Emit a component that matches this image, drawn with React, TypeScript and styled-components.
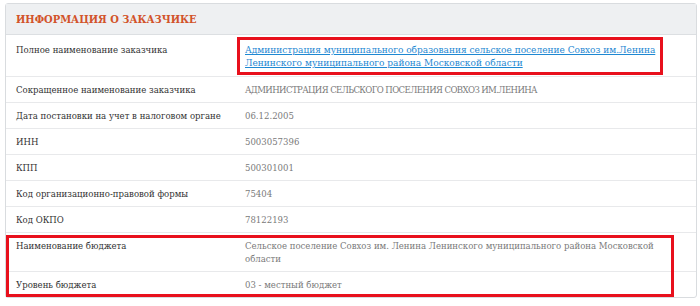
import React from "react";
import styled, { createGlobalStyle, css } from "styled-components";

const Global = createGlobalStyle`
  html, body { margin: 0; padding: 0; background: #ffffff; }
  body { font-family: "DejaVu Serif Condensed", "DejaVu Serif", serif; }
`;

const Page = styled.div`
  padding: 3px 3px 5px 5px;
`;

const Panel = styled.section`
  border: 1px solid #d9dcdf;
  border-radius: 3px;
  background: #fff;
`;

const Header = styled.header`
  background: #eef0f2;
  border-bottom: 1px solid #dcdfe2;
  height: 30px;
  display: flex;
  align-items: center;
  padding: 0 10px;
`;

const Title = styled.h2`
  margin: 0;
  font-size: 11px;
  font-weight: bold;
  color: #d2532a;
`;

const Row = styled.div<{ $last?: boolean }>`
  display: grid;
  grid-template-columns: 231px 1fr;
  border-bottom: ${(p) => (p.$last ? "none" : "1px solid #e8e9eb")};
  font-size: 9.5px;
  line-height: 13px;
`;

const Label = styled.div<{ $tall?: boolean }>`
  padding: ${(p) => (p.$tall ? "8px 0 7px 10px" : "6px 0 6px 10px")};
  color: #333;
`;

const redFrame = css`
  content: "";
  position: absolute;
  border: 3px solid #e8101c;
  pointer-events: none;
`;

const Value = styled.div<{ $tall?: boolean; $caps?: boolean; $boxed?: boolean }>`
  position: relative;
  padding: ${(p) => (p.$tall ? "8px 38px 7px 8px" : "6px 40px 6px 8px")};
  color: #7a7a7a;
  letter-spacing: ${(p) => (p.$caps ? "-0.6px" : "normal")};
  ${(p) =>
    p.$boxed &&
    css`
      &::after {
        ${redFrame};
        top: 2px;
        bottom: 1px;
        left: 0;
        right: 33px;
      }
    `}
`;

const Link = styled.a`
  color: #1e88d2;
  font-size: 10px;
  text-decoration: underline;
`;

const BudgetGroup = styled.div`
  position: relative;
  &::after {
    ${redFrame};
    top: 2px;
    bottom: 0;
    left: 0;
    right: 22px;
  }
`;

const rows: [string, string, boolean][] = [
  ["Сокращенное наименование заказчика", "АДМИНИСТРАЦИЯ СЕЛЬСКОГО ПОСЕЛЕНИЯ СОВХОЗ ИМ.ЛЕНИНА", true],
  ["Дата постановки на учет в налоговом органе", "06.12.2005", false],
  ["ИНН", "5003057396", false],
  ["КПП", "500301001", false],
  ["Код организационно-правовой формы", "75404", false],
  ["Код ОКПО", "78122193", false],
];

export default function App() {
  return (
    <Page>
      <Global />
      <Panel>
        <Header>
          <Title>ИНФОРМАЦИЯ О ЗАКАЗЧИКЕ</Title>
        </Header>
        <Row>
          <Label $tall>Полное наименование заказчика</Label>
          <Value $tall $boxed>
            <Link href="#">
              Администрация муниципального образования сельское поселение Совхоз им.Ленина Ленинского муниципального района Московской области
            </Link>
          </Value>
        </Row>
        {rows.map(([l, v, caps]) => (
          <Row key={l}>
            <Label>{l}</Label>
            <Value $caps={caps}>{v}</Value>
          </Row>
        ))}
        <BudgetGroup>
          <Row>
            <Label>Наименование бюджета</Label>
            <Value>
              Сельское поселение Совхоз им. Ленина Ленинского муниципального района Московской области
            </Value>
          </Row>
          <Row $last>
            <Label>Уровень бюджета</Label>
            <Value>03 - местный бюджет</Value>
          </Row>
        </BudgetGroup>
      </Panel>
    </Page>
  );
}
